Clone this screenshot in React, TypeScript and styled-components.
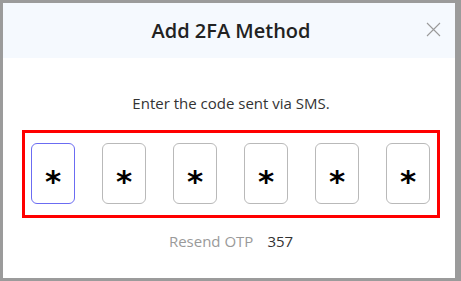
import React from 'react';
import styled, { createGlobalStyle } from 'styled-components';

const GlobalStyle = createGlobalStyle`
  html, body {
    margin: 0;
    padding: 0;
    background: #9b9b9b;
  }
  body {
    font-family: 'Open Sans', 'Noto Sans', Arial, sans-serif;
  }
`;

const Frame = styled.div`
  padding: 3px;
  width: 461px;
  height: 281px;
  box-sizing: border-box;
`;

const Dialog = styled.div`
  width: 452px;
  height: 275px;
  background: #ffffff;
  display: flex;
  flex-direction: column;
`;

const Header = styled.div`
  position: relative;
  height: 55px;
  background: #f5f9fe;
  display: flex;
  align-items: center;
  justify-content: center;
  padding-left: 4px;
`;

const Title = styled.h2`
  margin: 0;
  font-size: 20px;
  font-weight: 600;
  color: #222;
`;

const CloseButton = styled.button`
  position: absolute;
  right: 14px;
  top: 18px;
  width: 16px;
  height: 16px;
  padding: 0;
  border: none;
  background: transparent;
  display: flex;
  align-items: center;
  justify-content: center;
  cursor: pointer;
`;

const Body = styled.div`
  display: flex;
  flex-direction: column;
  align-items: center;
  padding: 35px 0 0 4px;
`;

const Instruction = styled.p`
  margin: 0 0 17px;
  font-size: 15px;
  line-height: 20px;
  color: #333;
`;

const CodeGroup = styled.div`
  display: flex;
  gap: 27px;
  border: 3px solid #ff0000;
  padding: 10px 7px 11px 6px;
`;

const Digit = styled.div<{ $active?: boolean }>`
  width: 44px;
  height: 61px;
  box-sizing: border-box;
  border-radius: 6px;
  border: 1px solid ${p => (p.$active ? '#6b6cf2' : '#b9b9b9')};
  display: flex;
  align-items: center;
  justify-content: center;
  font-family: 'DejaVu Sans', sans-serif;
  font-size: 31px;
  font-weight: bold;
  color: #000;
  padding-top: 14px;
`;

const ResendRow = styled.div`
  margin-top: 13px;
  display: flex;
  gap: 14px;
  font-size: 15px;
  line-height: 20px;
`;

const ResendLink = styled.span`
  color: #9a9a9a;
`;

const Countdown = styled.span`
  color: #333;
`;

export default function App() {
  const digits = ['*', '*', '*', '*', '*', '*'];
  return (
    <>
      <GlobalStyle />
      <Frame>
        <Dialog>
          <Header>
            <Title>Add 2FA Method</Title>
            <CloseButton aria-label="Close">
              <svg width="15" height="15" viewBox="0 0 15 15">
                <path d="M1 1 L14 14 M14 1 L1 14" stroke="#9a9a9a" strokeWidth="1.1" fill="none" />
              </svg>
            </CloseButton>
          </Header>
          <Body>
            <Instruction>Enter the code sent via SMS.</Instruction>
            <CodeGroup>
              {digits.map((d, i) => (
                <Digit key={i} $active={i === 0}>{d}</Digit>
              ))}
            </CodeGroup>
            <ResendRow>
              <ResendLink>Resend OTP</ResendLink>
              <Countdown>357</Countdown>
            </ResendRow>
          </Body>
        </Dialog>
      </Frame>
    </>
  );
}
